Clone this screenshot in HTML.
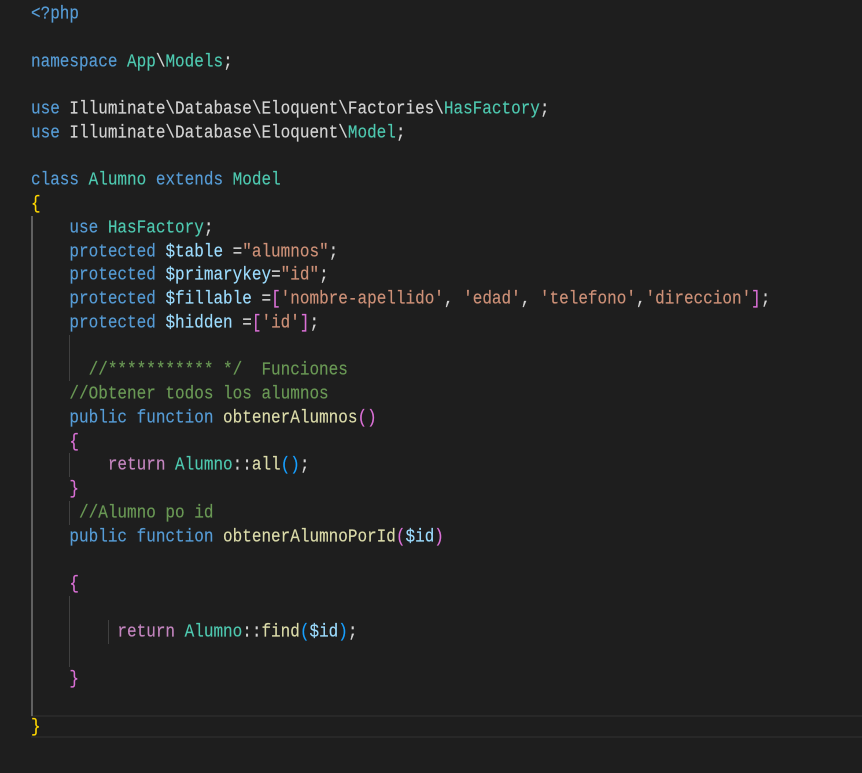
<!DOCTYPE html>
<html>
<head>
<meta charset="utf-8">
<style>
html,body{margin:0;padding:0;background:#1e1e1e;width:862px;height:773px;overflow:hidden}
#e{position:relative;width:862px;height:773px;overflow:hidden;background:#1e1e1e;font-family:"Liberation Mono","DejaVu Sans Mono",monospace;font-size:16px;color:#d4d4d4}
.l{position:absolute;left:31px;height:24px;line-height:24px;white-space:pre;transform:scaleY(1.14);transform-origin:0 50%;margin-top:1px;-webkit-text-stroke:0.15px currentColor}
.g{position:absolute;width:1px;background:#404040}
.k{color:#569cd6}.c{color:#4ec9b0}.s{color:#ce9178}.m{color:#6a9955}.f{color:#dcdcaa}.v{color:#9cdcfe}.r{color:#c586c0}.y{color:#ffd700}.p{color:#da70d6}.b{color:#179fff}
</style>
</head>
<body>
<div id="e">
<div style="position:absolute;left:31px;top:715px;width:831px;border-top:2px solid #282828;border-bottom:2px solid #282828;box-sizing:border-box;height:23px"></div>
<div class="g" style="left:31px;top:216px;height:500px;width:2px;background:#606060"></div>
<div class="g" style="left:69px;top:335px;height:46px"></div>
<div class="g" style="left:69px;top:453px;height:24px"></div>
<div class="g" style="left:69px;top:501px;height:24px"></div>
<div class="g" style="left:69px;top:596px;height:71px"></div>
<div class="g" style="left:108px;top:620px;height:24px"></div>
<div class="l" style="top:1px"><span class="k">&lt;?php</span></div>
<div class="l" style="top:49px"><span class="k">namespace</span> <span class="c">App</span>\<span class="c">Models</span>;</div>
<div class="l" style="top:96px"><span class="k">use</span> Illuminate\Database\Eloquent\Factories\<span class="c">HasFactory</span>;</div>
<div class="l" style="top:120px"><span class="k">use</span> Illuminate\Database\Eloquent\<span class="c">Model</span>;</div>
<div class="l" style="top:167px"><span class="k">class</span> <span class="c">Alumno</span> <span class="k">extends</span> <span class="c">Model</span></div>
<div class="l" style="top:191px"><span class="y">{</span></div>
<div class="l" style="top:215px">    <span class="k">use</span> <span class="c">HasFactory</span>;</div>
<div class="l" style="top:239px">    <span class="k">protected</span> <span class="v">$table</span> =<span class="s">"alumnos"</span>;</div>
<div class="l" style="top:262px">    <span class="k">protected</span> <span class="v">$primarykey</span>=<span class="s">"id"</span>;</div>
<div class="l" style="top:286px">    <span class="k">protected</span> <span class="v">$fillable</span> =<span class="p">[</span><span class="s">'nombre-apellido'</span>, <span class="s">'edad'</span>, <span class="s">'telefono'</span>,<span class="s">'direccion'</span><span class="p">]</span>;</div>
<div class="l" style="top:310px">    <span class="k">protected</span> <span class="v">$hidden</span> =<span class="p">[</span><span class="s">'id'</span><span class="p">]</span>;</div>
<div class="l" style="top:357px">      <span class="m">//*********** */  Funciones</span></div>
<div class="l" style="top:381px">    <span class="m">//Obtener todos los alumnos</span></div>
<div class="l" style="top:405px">    <span class="k">public</span> <span class="k">function</span> <span class="f">obtenerAlumnos</span><span class="p">()</span></div>
<div class="l" style="top:429px">    <span class="p">{</span></div>
<div class="l" style="top:452px">        <span class="r">return</span> <span class="c">Alumno</span>::<span class="f">all</span><span class="b">()</span>;</div>
<div class="l" style="top:476px">    <span class="p">}</span></div>
<div class="l" style="top:500px">     <span class="m">//Alumno po id</span></div>
<div class="l" style="top:524px">    <span class="k">public</span> <span class="k">function</span> <span class="f">obtenerAlumnoPorId</span><span class="p">(</span><span class="v">$id</span><span class="p">)</span></div>
<div class="l" style="top:571px">    <span class="p">{</span></div>
<div class="l" style="top:619px">         <span class="r">return</span> <span class="c">Alumno</span>::<span class="f">find</span><span class="b">(</span><span class="v">$id</span><span class="b">)</span>;</div>
<div class="l" style="top:666px">    <span class="p">}</span></div>
<div class="l" style="top:714px"><span class="y">}</span></div>
</div>
</body>
</html>
